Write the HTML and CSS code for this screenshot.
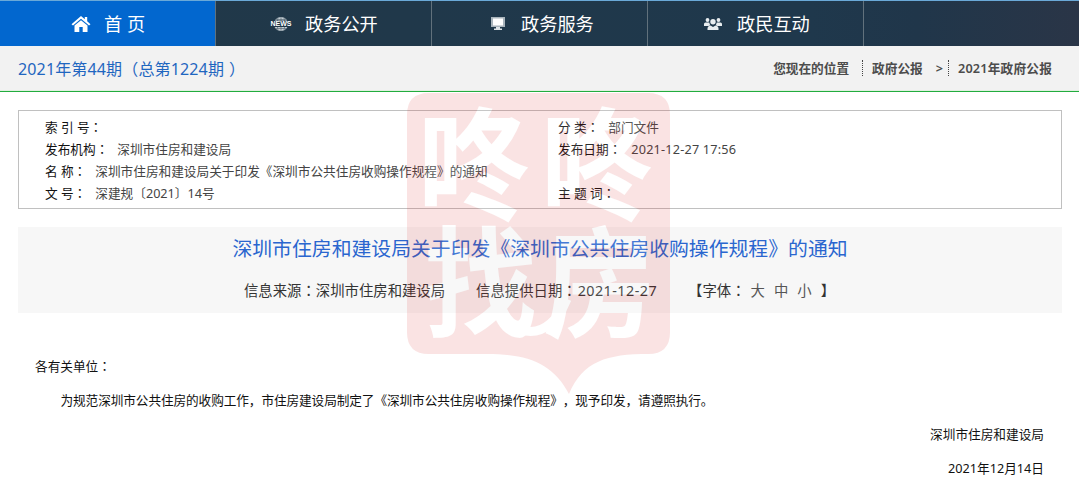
FILE: index.html
```
<!DOCTYPE html>
<html lang="zh-CN">
<head>
<meta charset="utf-8">
<title>深圳市住房和建设局</title>
<link rel="stylesheet" href="styles.css">
</head>
<body>
<nav class="nav">
  <a class="nav-item active"><svg class="ic home" width="20" height="18" viewBox="0 0 20 18"><path fill="#fff" d="M10 1 0.500 9.200 2 10.400 10 3.700l8 6.700 1.500-1.200-3.300-2.900V2h-2.400v2.200zM10 5.200 3.500 10.600V17h4.800v-5h3.400v5h4.800v-6.400z"/></svg><span>首 页</span></a>
  <a class="nav-item"><svg class="ic news" width="22" height="16" viewBox="0 0 22 16"><circle cx="11" cy="8" r="7" fill="#c3ccd2"/><path d="M5 3.500h12M5 12.500h12M11 1v14M8 1.500q-2 6.500 0 13M14 1.500q2 6.500 0 13" stroke="#5a6c78" stroke-width=".7" fill="none"/><rect y="4.600" width="22" height="6.400" fill="#213849"/><text x="0.500" y="10.300" textLength="21" lengthAdjust="spacingAndGlyphs" class="news-text">NEWS</text></svg><span>政务公开</span></a>
  <a class="nav-item"><svg class="ic screen" width="14" height="13" viewBox="0 0 14 13"><path fill="#a9b4bc" d="M0 0h14v10H0z"/><path fill="#fff" d="M2 1.500h10v7H2z"/><path fill="#dde3e7" d="M5 10h4v1.500h2V13H3v-1.500h2z"/></svg><span>政务服务</span></a>
  <a class="nav-item"><svg class="ic people" width="20" height="14" viewBox="0 0 20 14"><g fill="#e8edf0"><circle cx="4.500" cy="3" r="1.900"/><circle cx="15.500" cy="3" r="1.900"/><circle cx="10" cy="4.800" r="2.700"/><path d="M1 8.500V7q0-1.500 1.500-1.500h3.700l1 2.800L5.500 9H1zM19 8.500V7q0-1.500-1.500-1.500h-3.700l-1 2.800 1.700.7H19zM4.500 13v-1.500Q4.500 9 7.500 8.500L10 10l2.500-1.500q3 .5 3 3V13z"/></g></svg><span>政民互动</span></a>
</nav>
<header class="crumbbar">
  <div class="issue">2021年第44期（总第1224期<span class="close">）</span></div>
  <div class="crumbs"><span>您现在的位置</span><span class="c2">政府公报</span><span class="gt">&gt;</span><span class="c3">2021年政府公报</span></div>
</header>
<main class="main">
  <section class="info">
    <div class="row"><div class="left"><b>索 引 号<i lang="zh-TW">：</i></b></div><div><b>分 类<i lang="zh-TW">：</i></b><span class="v9">部门文件</span></div></div>
    <div class="row"><div class="left"><b>发布机构<i lang="zh-TW">：</i></b><span class="v9">深圳市住房和建设局</span></div><div><b>发布日期<i lang="zh-TW">：</i></b><span class="v9 date">2021-12-27 17:56</span></div></div>
    <div class="row"><div><b>名 称<i lang="zh-TW">：</i></b><span class="v9">深圳市住房和建设局关于印发《深圳市公共住房收购操作规程》的通知</span></div></div>
    <div class="row"><div class="left"><b>文 号<i lang="zh-TW">：</i></b><span class="v9">深建规〔2021〕14号</span></div><div><b>主 题 词<i lang="zh-TW">：</i></b></div></div>
  </section>
  <section class="heading">
    <h1>深圳市住房和建设局关于印发《深圳市公共住房收购操作规程》的通知</h1>
    <div class="meta"><span class="src">信息来源<i lang="zh-TW">：</i>深圳市住房和建设局</span><span class="prov">信息提供日期<i lang="zh-TW">：</i><span class="when">2021-12-27</span></span><span class="font">【字体<i lang="zh-TW">：</i></span><span class="size">大</span><span class="size">中</span><span class="size">小</span><span>】</span></div>
  </section>
  <article class="body">
    <p>各有关单位<i lang="zh-TW">：</i></p>
    <p class="indent">为规范深圳市公共住房的收购工作，市住房建设局制定了《深圳市公共住房收购操作规程》，现予印发，请遵照执行。</p>
    <p class="right">深圳市住房和建设局</p>
    <p class="right day">2021年12月14日</p>
  </article>
</main>
<svg class="mark" width="264" height="302" viewBox="0 0 264 302">
  <path fill="#d81f1f" d="M22 0H241Q263 0 263 22V239Q263 261 241 261C200 261 176 268 162 301C146 270 120 261 80 261H22Q0 261 0 239V22Q0 0 22 0z"/>
  <path fill="none" stroke="#fff" stroke-width="9" d="M92 208C104 248 142 250 160 206"/>
  <g class="mark-text">
    <text transform="translate(11 118) scale(.93 1.02)">咚</text>
    <text transform="translate(134 118) scale(.93 1.02)">咚</text>
    <text transform="translate(17 235) scale(.94 1)">找</text>
    <text transform="translate(136 235) scale(.94 1)">房</text>
  </g>
</svg>
</body>
</html>
```
FILE: styles.css
```
* { box-sizing: border-box; }
body {
  margin: 0;
  width: 1079px;
  height: 485px;
  overflow: hidden;
  position: relative;
  background: #fff;
  color: #111;
  font: 12.67px/22px "Noto Sans", "Noto Sans CJK SC", sans-serif;
  text-spacing-trim: space-all;
}
/* full-width colon centred in its cell */
i { font-style: normal; font-family: "Noto Sans CJK TC", sans-serif; line-height: 1; }
.nav {
  display: flex;
  height: 46px;
  border-top: 1px solid #6aa9d8;
  background: linear-gradient(90deg, #213848 0%, #1f384c 75%, #20364a 85%, #2a3547 100%);
}
.nav-item {
  width: 216px;
  display: flex;
  align-items: center;
  border-right: 1px solid #61717c;
  color: #fff;
  font-size: 18.2px;
  line-height: 44px;
  white-space: pre;
}
.nav-item.active { background: #0267cf; }
.home { margin: 0 13px 0 71px; }
.news { margin: 0 13px 0 54px; }
.screen { margin: 0 16px 0 59px; }
.people { margin: 0 14px 0 55px; }
.news-text { font: bold 6.5px "Liberation Sans", sans-serif; fill: #fff; }
.crumbbar {
  height: 46px;
  display: flex;
  justify-content: space-between;
  padding: 0 27px 0 18px;
  background: #f2f2f2;
  border-bottom: 1px solid #22ac3e;
  box-shadow: inset 0 -1px #e0f0e0;
}
.issue { color: #1f66c0; font-size: 16px; line-height: 46px; letter-spacing: .15px; }
.close { margin-left: 5px; }
.crumbs {
  display: flex;
  align-items: center;
  height: 44px;
  font-weight: 600;
  color: #4c4c4c;
  line-height: 16px;
}
.c2, .c3 { border-left: 1px dotted #444; padding-left: 9px; }
.c2 { margin-left: 13px; }
.c3 { letter-spacing: .2px; }
.gt { margin: 0 5px 0 13px; }
.main { padding: 18px 17px 0 18px; }
.info {
  height: 99px;
  padding: 5px 0 0 26px;
  border: 1px solid #c0c0c0;
}
.row { display: flex; height: 22px; white-space: pre; }
.left { width: 513px; }
.info b { font-weight: 400; color: #111; }
.v9 { margin-left: 9px; color: #444; }
.date { letter-spacing: .2px; margin-left: 10px; }
.heading {
  margin-top: 18px;
  height: 86px;
  background: #f7f7f7;
}
h1 {
  margin: 0;
  padding-top: 6px;
  text-align: center;
  font-size: 19.85px;
  font-weight: 400;
  line-height: 32px;
  color: #2a66cf;
}
.meta {
  display: flex;
  padding: 15px 0 0 226px;
  font-size: 14.36px;
  color: #333;
}
.when { letter-spacing: .45px; margin-left: 1px; }
.prov { margin: 0 31px 0 31px; }
.font { margin-right: 5px; }
.size { margin-right: 9px; color: #555; }
.body { padding: 36px 18px 0 17px; line-height: 34px; }
.body p { margin: 0; height: 34px; }
.body .indent { padding-left: 25.5px; letter-spacing: -.1px; white-space: nowrap; }
.body .right { text-align: right; }
.mark {
  position: absolute;
  left: 407px;
  top: 93px;
  opacity: .12;
  pointer-events: none;
}
.mark-text text {
  font: 700 120px "Noto Sans CJK SC", sans-serif;
  fill: #fff;
}
```
